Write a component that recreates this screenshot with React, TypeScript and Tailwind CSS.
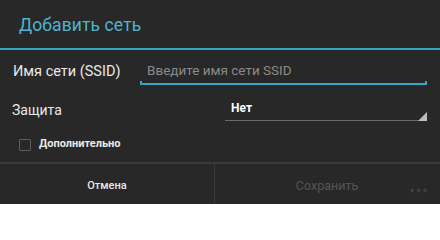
import React from 'react';

const font = { fontFamily: 'Roboto, "Noto Sans", sans-serif' };

const App: React.FC = () => {
  return (
    <div className="w-[440px] h-[204px] bg-[#282828] flex flex-col overflow-hidden" style={font}>
      {/* title */}
      <div className="h-[48px] flex items-center pl-[19px] pt-[3px]">
        <span className="text-[17.5px] text-[#4fb3cf] tracking-[0.1px]">Добавить сеть</span>
      </div>
      <div className="h-[2px] bg-[#35a7c6]" />

      {/* ssid row */}
      <div className="h-[36px] flex items-end pl-[13px] pr-[13px]">
        <span className="w-[127px] pb-[3px] text-[14.5px] text-[#e8e8e8]">Имя сети (SSID)</span>
        <div className="relative flex-1 h-[30px] flex items-center pl-[7px] pb-[1px]">
          <span className="text-[13.5px] text-[#8a8a8a]">Введите имя сети SSID</span>
          <div className="absolute left-0 right-0 bottom-[1px] h-[2px] bg-[#35a7c6]" />
          <div className="absolute left-0 bottom-[1px] w-[2px] h-[4px] bg-[#35a7c6]" />
          <div className="absolute right-0 bottom-[1px] w-[2px] h-[4px] bg-[#35a7c6]" />
        </div>
      </div>

      {/* security row */}
      <div className="h-[40px] flex items-center pl-[12px] pr-[13px] pt-[8px]">
        <span className="w-[213px] text-[14px] text-[#e8e8e8]">Защита</span>
        <div className="relative flex-1 h-[28px] flex items-center pl-[6px] pb-[5px]">
          <span className="text-[12px] font-bold text-white">Нет</span>
          <div className="absolute left-0 right-0 bottom-[3px] h-px bg-[#6a6a6a]" />
          <svg className="absolute right-0 bottom-[3px]" width="9" height="9" viewBox="0 0 9 9">
            <polygon points="9,0 9,9 0,9" fill="#bdbdbd" />
          </svg>
        </div>
      </div>

      {/* checkbox */}
      <div className="h-[36px] flex items-center pl-[19px] pt-[1px]">
        <div className="w-[12px] h-[12px] border border-[#5e5e5e] rounded-[1px]" />
        <span className="ml-[8px] text-[11px] font-bold text-[#e8e8e8]">Дополнительно</span>
      </div>

      <div className="h-[2px] bg-[#3a3a3a]" />

      {/* buttons */}
      <div className="flex-1 flex">
        <div className="w-[214px] flex items-center justify-center pt-[4px]">
          <span className="text-[11px] font-medium text-[#e8e8e8]">Отмена</span>
        </div>
        <div className="w-px bg-[#3a3a3a]" />
        <div className="relative flex-1 flex items-center justify-center pt-[4px] pr-[1px]">
          <span className="text-[12.5px] text-[#555555]">Сохранить</span>
          <span className="absolute right-[11px] top-[21px] text-[10px] text-[#4a4a4a] tracking-[2px]">***</span>
        </div>
      </div>
    </div>
  );
};

export default App;
